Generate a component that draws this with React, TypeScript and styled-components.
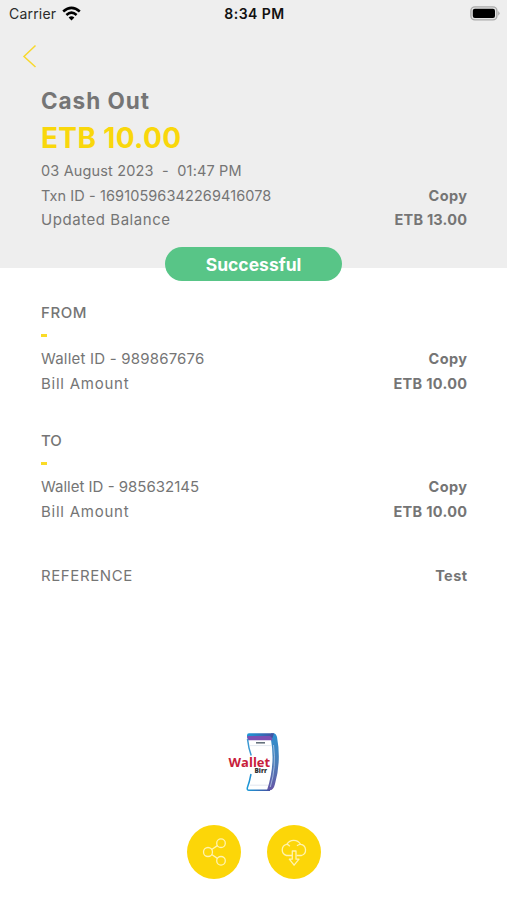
import React from 'react';
import styled, { createGlobalStyle } from 'styled-components';

const GlobalStyle = createGlobalStyle`
  * { box-sizing: border-box; }
  body { margin: 0; background: #fff; }
`;

const Screen = styled.main`
  width: 507px;
  height: 900px;
  display: flex;
  flex-direction: column;
  overflow: hidden;
  background: #fff;
  color: #757575;
  font-family: Inter, "Open Sans", sans-serif;
`;

const Header = styled.header`
  height: 268px;
  flex: none;
  background: #eee;
`;

const StatusBar = styled.div`
  display: grid;
  grid-template-columns: 1fr auto 1fr;
  align-items: center;
  height: 28px;
  padding: 0 7px 0 9px;
  color: #111;
  font-size: 14px;
  line-height: 28px;
`;

const Carrier = styled.div`
  display: flex;
  align-items: center;
  gap: 5.5px;
  letter-spacing: 0.2px;
  color: #2b2b2b;
  svg { margin-top: -2px; }
`;

const Clock = styled.div`
  font-weight: 600;
  letter-spacing: 0.45px;
`;

const Battery = styled.svg`
  justify-self: end;
  margin-top: -2px;
`;

const BackButton = styled.button`
  display: block;
  width: 16px;
  height: 24px;
  margin: 16px 0 0 22px;
  padding: 0;
  border: 0;
  background: none;
  svg { display: block; }
`;

const Summary = styled.section`
  padding: 19px 40px 0 41px;
`;

const Title = styled.h1`
  margin: 0;
  height: 28px;
  line-height: 28px;
  font-size: 22.5px;
  font-weight: 700;
  letter-spacing: 0.95px;
`;

const Amount = styled.div`
  height: 44px;
  line-height: 46px;
  font-size: 28px;
  font-weight: 700;
  color: #f9d70b;
  letter-spacing: 0.35px;
`;

const Row = styled.div`
  display: flex;
  justify-content: space-between;
  height: 24.5px;
  line-height: 24.5px;
  font-size: 14.5px;
  white-space: pre;
`;

const Label = styled.span<{ $track?: number; $weight?: number; $size?: number }>`
  font-size: ${p => p.$size ?? 14.5}px;
  font-weight: ${p => p.$weight ?? 400};
  letter-spacing: ${p => p.$track ?? 0}px;
`;

const Value = styled.span<{ $track?: number }>`
  font-weight: 700;
  letter-spacing: ${p => p.$track ?? 0}px;
  margin-right: ${p => -(p.$track ?? 0)}px;
`;

const Badge = styled.div`
  width: 177px;
  height: 34px;
  flex: none;
  margin: -21.5px 0 0 165px;
  border-radius: 17px;
  background: #58c587;
  color: #fff;
  font-size: 17.5px;
  font-weight: 700;
  line-height: 35px;
  text-align: center;
`;

const Details = styled.section`
  display: flex;
  flex-direction: column;
  gap: 33px;
  padding: 20.5px 40px 0 41px;
`;

const Party = styled.div`
  display: flex;
  flex-direction: column;
`;

const Dash = styled.div`
  width: 6px;
  height: 3px;
  margin: 8px 0 10.5px;
  background: #fadb26;
`;

const Reference = styled.div`
  padding: 40px 40px 0 41px;
`;

const Footer = styled.footer`
  display: flex;
  flex-direction: column;
  align-items: center;
  margin-top: auto;
  padding-bottom: 21px;
`;

const Actions = styled.div`
  display: flex;
  gap: 26px;
  margin-top: 33px;
`;

const RoundButton = styled.button`
  display: grid;
  place-items: center;
  width: 54px;
  height: 54px;
  padding: 0;
  border: 0;
  border-radius: 50%;
  background: #fcd608;
`;

function WifiIcon() {
  return (
    <svg width="19" height="15" viewBox="0 0 19 15">
      <g fill="none" stroke="#000" strokeWidth="2.6">
        <path d="M1.2 5.4Q9.5-1.7 17.8 5.4" />
        <path d="M4.4 8.9Q9.5 4.5 14.6 8.9" />
      </g>
      <path d="M6.6 11.4Q9.5 8.9 12.4 11.4L9.5 14.4Z" />
    </svg>
  );
}

function WalletLogo() {
  return (
    <svg width="53" height="60" viewBox="0 0 53 60">
      <defs>
        <linearGradient id="edge" x1="0" y1="0" x2="0" y2="1">
          <stop offset="0" stopColor="#2b8fd0" />
          <stop offset=".5" stopColor="#4a7fb8" />
          <stop offset="1" stopColor="#6656a6" />
        </linearGradient>
        <linearGradient id="rim" x1="0" y1="0" x2="1" y2="0">
          <stop offset="0" stopColor="#1c9ad8" />
          <stop offset="1" stopColor="#454e9f" />
        </linearGradient>
      </defs>
      <path d="M44 1.2H46.5Q49 1.2 50 5Q54.5 29 48 52Q46.5 58.3 42.5 58.3H40Q48.5 32 44 8Z" fill="url(#edge)" />
      <path d="M20.5 9L20 4Q19.8 1.2 22 1.2H47L45.5 6H20.5Z" fill="url(#rim)" />
      <path d="M20.2 4H43Q45 5 45.5 8.3H20.7Z" fill="#7c50b3" />
      <path d="M20.5 7Q21.5 16 24.2 23.5" fill="none" stroke="#3a98d2" strokeWidth="1.5" />
      <path d="M24 42Q22.5 50 20.4 55.5Q19.7 58.2 22 58.2H43" fill="none" stroke="url(#rim)" strokeWidth="1.5" />
      <path d="M46.5 13Q49.5 35 43.3 55" fill="none" stroke="#b4cce8" strokeWidth=".8" />
      <path d="M29 10.8H38" stroke="#66727d" strokeWidth="1.6" />
      <path d="M23 13.6H44M23 53.2H41" stroke="#dbe1eb" strokeWidth=".8" />
      <text fontFamily="Open Sans, sans-serif" fontWeight="700">
        <tspan x="1.6" y="35.4" textLength="41.5" lengthAdjust="spacingAndGlyphs" fill="#c8203b" fontSize="13.2">Wallet</tspan>
        <tspan x="27.5" y="41.4" textLength="12.5" lengthAdjust="spacingAndGlyphs" fill="#303030" fontSize="6" fontWeight="800">Birr</tspan>
      </text>
    </svg>
  );
}

function ShareIcon() {
  return (
    <svg width="26" height="30" viewBox="0 0 26 30" fill="none" stroke="#fff3b0" strokeWidth="1.3">
      <circle cx="7" cy="15" r="4.5" />
      <circle cx="20" cy="6.2" r="4.3" />
      <circle cx="20" cy="23.8" r="4.3" />
      <path d="M10.7 12.5L16.4 8.6M10.7 17.5L16.4 21.4" />
    </svg>
  );
}

function DownloadIcon() {
  return (
    <svg width="30" height="30" viewBox="0 0 30 30" fill="none" stroke="#fff3b0" strokeWidth="1.3" strokeLinejoin="round">
      <path d="M13 18.5H7.5A5.7 5.7 0 0 1 7.8 7.4A8 8 0 0 1 21.6 7.4A5.7 5.7 0 0 1 22.5 18.5H17.5" />
      <path d="M7.8 7.4Q9.4 7.6 10.8 9.2M21.6 7.4Q19.5 7.4 18 8.8" />
      <path d="M13.3 14H17V22.2H20L15.1 28.2L10.3 22.2H13.3Z" />
    </svg>
  );
}

function PartyDetails({ title, titleTrack, wallet, track }: { title: string; titleTrack: number; wallet: string; track: number }) {
  return (
    <Party>
      <Row><Label $size={15} $weight={500} $track={titleTrack}>{title}</Label></Row>
      <Dash />
      <Row><Label $size={15} $track={track}>Wallet ID - {wallet}</Label><Value $track={0.4}>Copy</Value></Row>
      <Row><Label $size={15} $track={0.75}>Bill Amount</Label><Value $track={0.3}>ETB 10.00</Value></Row>
    </Party>
  );
}

export default function App() {
  return (
    <>
      <GlobalStyle />
      <Screen>
        <Header>
          <StatusBar>
            <Carrier>Carrier <WifiIcon /></Carrier>
            <Clock>8:34 PM</Clock>
            <Battery width="30" height="15" viewBox="0 0 30 15">
              <rect x=".9" y=".9" width="26" height="13" rx="4" fill="#e4e4e4" stroke="#aaa" strokeWidth="1.4" />
              <rect x="2.8" y="2.8" width="22.2" height="9.2" rx="2" />
              <path d="M28.2 5Q31 7.3 28.2 9.7Z" fill="#aaa" />
            </Battery>
          </StatusBar>
          <BackButton aria-label="Back">
            <svg width="16" height="24" viewBox="0 0 16 24" fill="none" stroke="#f8d82d" strokeWidth="1.5"><path d="M13.5 1.5L2 12.5L13.5 23" /></svg>
          </BackButton>
          <Summary>
            <Title>Cash Out</Title>
            <Amount>ETB 10.00</Amount>
            <Row><Label $track={0.15}>03 August 2023  -  01:47 PM</Label></Row>
            <Row><Label $track={0.09}>Txn ID - 16910596342269416078</Label><Value $track={0.4}>Copy</Value></Row>
            <Row><Label $size={15} $track={0.55}>Updated Balance</Label><Value $track={0.2}>ETB 13.00</Value></Row>
          </Summary>
        </Header>
        <Badge>Successful</Badge>
        <Details>
          <PartyDetails title="FROM" titleTrack={0.6} wallet="989867676" track={0.2} />
          <PartyDetails title="TO" titleTrack={0} wallet="985632145" track={0} />
        </Details>
        <Reference>
          <Row><Label $size={15} $track={0.6}>REFERENCE</Label><Value $track={0.4}>Test</Value></Row>
        </Reference>
        <Footer>
          <WalletLogo />
          <Actions>
            <RoundButton aria-label="Share"><ShareIcon /></RoundButton>
            <RoundButton aria-label="Download"><DownloadIcon /></RoundButton>
          </Actions>
        </Footer>
      </Screen>
    </>
  );
}
